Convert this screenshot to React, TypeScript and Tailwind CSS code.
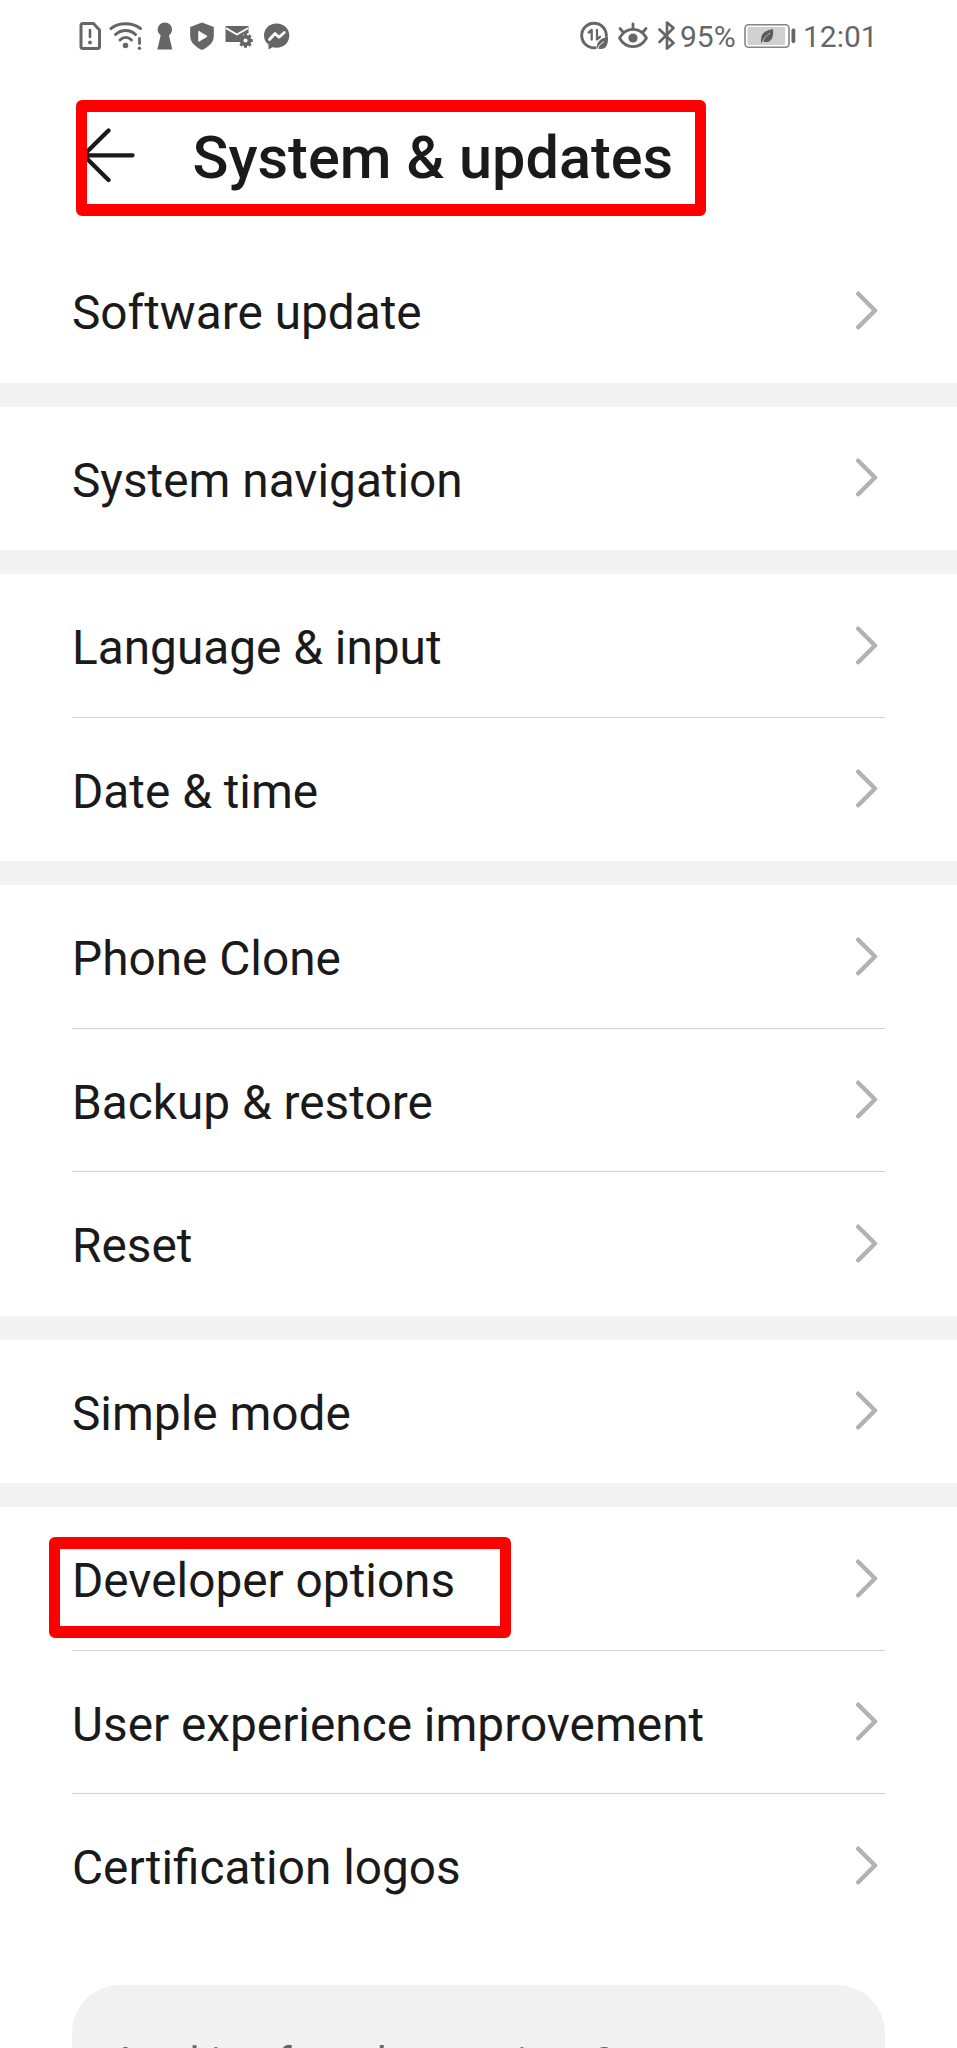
import React from "react";

const groups = [
  ["Software update"],
  ["System navigation"],
  ["Language & input", "Date & time"],
  ["Phone Clone", "Backup & restore", "Reset"],
  ["Simple mode"],
  ["Developer options", "User experience improvement", "Certification logos"],
];

function StatusBar() {
  return (
    <header className="flex h-[72px] shrink-0 items-center justify-between pl-[78px] pr-[80px] text-[#666]">
      <div className="flex items-center">
        <svg className="h-[30px] w-[220px]" viewBox="78 21 220 30" fill="none" stroke="currentColor" strokeLinecap="round" strokeLinejoin="round">
          <path d="M83 23.500h10.500l6 6.500v16.500a2 2 0 0 1-2 2H83a2 2 0 0 1-2-2v-21a2 2 0 0 1 2-2z" strokeWidth="3" />
          <path d="M90 30v7" strokeWidth="2.600" />
          <circle cx="90" cy="42.500" r="1.900" fill="currentColor" stroke="none" />
          <path d="M111 28.500c8-6.300 21-6.300 29.500 0M115.500 34.500c6-5.300 14.500-5.300 20 0M120 40c3.500-3.300 8-3.300 11.500 0" strokeWidth="3" />
          <circle cx="125.500" cy="45.500" r="2.800" fill="currentColor" stroke="none" />
          <path d="M139.500 38.500v5" strokeWidth="2.800" />
          <circle cx="139.500" cy="48.300" r="1.700" fill="currentColor" stroke="none" />
          <path d="M160.700 35.500a7.200 7.200 0 1 1 8.300 0L172.300 49.500h-15z" fill="currentColor" stroke="none" />
          <path d="M202 22.500l11.800 4.500v9c0 6-4.500 10.500-11.800 14-7.300-3.500-11.800-8-11.800-14v-9z" fill="currentColor" stroke="none" />
          <path d="M198.800 31.700v9.600l8-4.800z" fill="#fff" stroke="#fff" strokeWidth="1" />
          <path d="M225.500 26h23v7.500h-3.500l-3 2-2 3-.5 3.500h-14z" fill="currentColor" stroke="none" />
          <path d="M226.500 28.500l10.500 6 10.500-6" stroke="#fff" strokeWidth="2" />
          <circle cx="245.500" cy="40.500" r="3.900" strokeWidth="3.600" />
          <path d="M245.500 33.200v2.500M245.500 45.300v2.500M238.200 40.500h2.500M250.300 40.500h2.500M240.400 35.400l1.700 1.700M248.900 43.900l1.700 1.700M240.400 45.600l1.700-1.700M248.900 37.100l1.700-1.700" strokeWidth="3" strokeLinecap="butt" />
          <path d="M276.500 23.500c7.500 0 12.800 5.300 12.800 12 0 7-5.300 12.300-12.800 12.300l-4-.5-4 2.200v-5c-3-2.200-4.500-5.200-4.500-9 0-6.700 5.300-12 12.500-12z" fill="currentColor" stroke="none" />
          <path d="M269.500 39.500l5.500-6 4 3.700 5.300-4.700" stroke="#fff" strokeWidth="2.800" />
        </svg>
      </div>
      <div className="flex items-center font-[Roboto,sans-serif] text-[30px] leading-[36px]">
        <svg className="h-[32px] w-[98px]" viewBox="579 20 98 32" fill="none" stroke="currentColor" strokeLinecap="round" strokeLinejoin="round">
          <path d="M595 47.800a12.300 12.300 0 1 1 11.300-12" strokeWidth="2.900" />
          <path d="M588.700 32.500l3-2.500v9.500M597 30v9.500l3-2.700" strokeWidth="2.300" />
          <path d="M608 36.500c.5 8-2 12.500-7 12.500-1.500 0-2.500-.4-3.500-1l-1 1.500c0-7.500 2.500-10.500 11.500-13z" fill="currentColor" stroke="none" />
          <path d="M597.500 48.500c1.500-3.500 3.500-5 6-6.500" stroke="#fff" strokeWidth="1" />
          <path d="M619.500 38c6.500-11.500 20.500-11.500 27 0-6.500 11.500-20.500 11.500-27 0z" strokeWidth="2.800" />
          <circle cx="633" cy="38" r="4.600" fill="currentColor" stroke="none" />
          <path d="M633 24v5M620 28.500l3 3.500M646 28.500l-3 3.500" strokeWidth="2.800" />
          <path d="M659.500 29.500l14 13.500-6.500 5.500v-26l6.500 5.500-14 14" strokeWidth="2.700" />
        </svg>
        <span className="ml-[3px] w-[55px] whitespace-nowrap pt-px">95%</span>
        <svg className="ml-[8px] h-[26px] w-[54px]" viewBox="743 23 54 26" fill="none">
          <rect x="745" y="24.700" width="44" height="22.500" rx="3.500" stroke="#858585" strokeWidth="1.600" />
          <rect x="747.500" y="27" width="37.500" height="18" rx="1" fill="#d0d0d0" />
          <path d="M773 29c.8 8-1.500 13-7 13-1.500 0-2.300-.3-3-1l-1.500 1.700c-.7-.2-.7-.8-.5-1.700 0-8.500 4-10 12-12z" fill="#5c5c5c" />
          <path d="M762.500 41.500c1.800-3.500 4-6 7.500-8.500" stroke="#d0d0d0" strokeWidth=".8" />
          <rect x="791.500" y="28.500" width="3.800" height="14.500" rx="1.700" fill="#666" />
        </svg>
        <span className="ml-[6px] w-[74px] whitespace-nowrap pt-px">12:01</span>
      </div>
    </header>
  );
}

function Row({ label, divided, marked }: { label: string; divided: boolean; marked: boolean }) {
  return (
    <li className="relative mx-[72px] h-[143.500px]">
      <div className="flex h-full items-center justify-between pr-[7px]">
        <span className="whitespace-nowrap pt-[5px] text-[47.780px] leading-[56px]">{label}</span>
        <svg className="h-[40px] w-[24px]" viewBox="0 0 24 40" fill="none" stroke="#b2b2b2" strokeWidth="4.400" strokeLinecap="round" strokeLinejoin="round">
          <path d="M4.200 2.700L21 19.500 4.200 36.300" />
        </svg>
      </div>
      {divided && <div className="absolute inset-x-0 bottom-0 h-px bg-[#d3d3d3]" />}
      {marked && <div className="absolute -left-[23px] top-[30px] h-[100.500px] w-[462px] rounded-[6px] border-x-[11px] border-y-[12px] border-[#f00]" />}
    </li>
  );
}

export default function App() {
  return (
    <main className="flex h-[2048px] w-[957px] flex-col overflow-hidden bg-white font-[Roboto,sans-serif] text-[#1a1a1a]">
      <StatusBar />
      <div className="relative flex h-[167px] shrink-0 items-start">
        <svg className="ml-[82px] mt-[54px] h-[58px] w-[56px] shrink-0" viewBox="82 126 56 58" fill="none" stroke="currentColor" strokeWidth="4.300" strokeLinecap="round" strokeLinejoin="round">
          <path d="M108.500 130.500L83.500 155.300 108.500 180M84 155.300h48.500" />
        </svg>
        <h1 className="ml-[54.500px] mt-[51px] whitespace-nowrap text-[59.400px] font-medium leading-[70px]">System &amp; updates</h1>
        <div className="absolute left-[76px] top-[28px] h-[116px] w-[630px] rounded-[6px] border-x-[11px] border-y-[12px] border-[#f00]" />
      </div>
      <nav className="shrink-0">
        {groups.map((group, g) => (
          <section key={group[0]}>
            {g > 0 && <div className="h-[24px] bg-[#f3f3f3]" />}
            <ul>
              {group.map((label, i) => (
                <Row key={label} label={label} divided={i < group.length - 1} marked={label === "Developer options"} />
              ))}
            </ul>
          </section>
        ))}
      </nav>
      <section className="mx-[72px] mt-[47.500px] h-[160px] shrink-0 rounded-[48px] bg-[#f1f1f1] px-[48px] pt-[52px]">
        <p className="whitespace-nowrap text-[41.500px] leading-[50px] text-[#666]">Looking for other settings?</p>
      </section>
    </main>
  );
}
